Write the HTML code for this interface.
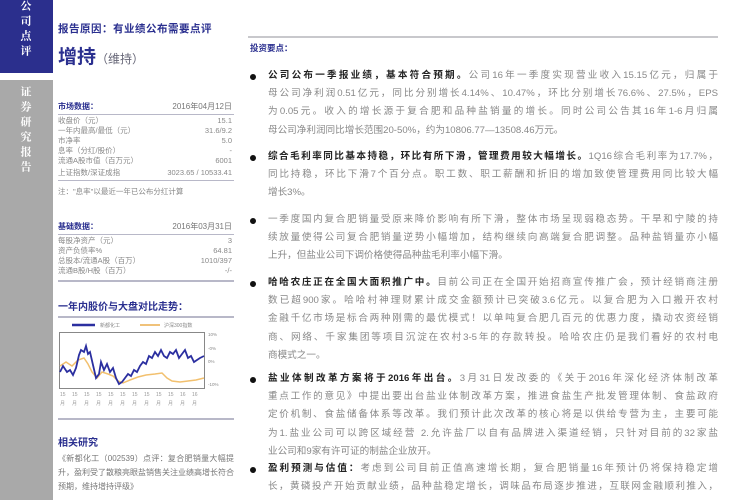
<!DOCTYPE html>
<html><head><meta charset="utf-8"><style>
*{margin:0;padding:0;box-sizing:border-box}
body{width:750px;height:500px;background:#fff;position:relative;overflow:hidden;font-family:"Liberation Sans","Noto Sans CJK SC",sans-serif;color:#777}
.a{position:absolute}
.vt{writing-mode:vertical-rl;color:#fff;font-weight:bold;font-size:11px;letter-spacing:4px;line-height:12px;font-family:"Noto Serif CJK SC","Noto Sans CJK SC",serif}
.row{position:absolute;left:58px;width:174px;font-size:7.5px;display:flex;justify-content:space-between;color:#888;line-height:10px}
.hd{position:absolute;left:58px;width:174px;font-size:8px;display:flex;justify-content:space-between;line-height:10px}
.hd b{color:#2a2f8f}
.ln{position:absolute;left:58px;width:176px;height:1px;background:#b8b8c8}
.p{position:absolute;left:268px;width:450px;font-size:9.6px;line-height:18.2px;color:#888;text-align:justify;text-align-last:justify}
.p div{white-space:nowrap;text-align-last:justify;text-align:justify}
.p b{color:#222}
.bl{position:absolute;left:250px;width:6px;height:6px;border-radius:50%;background:#111}
</style></head><body>
<div class="a" style="left:0;top:0;width:53px;height:73px;background:#2b2f8d"></div>
<div class="a vt" style="left:20px;top:0px">公司点评</div>
<div class="a" style="left:0;top:80px;width:53px;height:420px;background:#a9a9a9"></div>
<div class="a vt" style="left:20px;top:86px">证券研究报告</div>

<div class="a" style="left:58px;top:21px;font-size:10.5px;font-weight:bold;color:#2a2f8f;letter-spacing:0.5px">报告原因：有业绩公布需要点评</div>
<div class="a" style="left:58px;top:42px;font-size:19px;font-weight:bold;color:#2a2f8f">增持<span style="font-size:12px;font-weight:normal;color:#667">（维持）</span></div>

<div class="a" style="left:248px;top:36px;width:470px;height:2px;background:#c8c8cc"></div>
<div class="a" style="left:250px;top:42px;font-size:8.5px;font-weight:bold;color:#2a2f8f">投资要点：</div>

<div class="hd" style="top:102px"><b>市场数据：</b><span>2016年04月12日</span></div>
<div class="ln" style="top:114px"></div>
<div class="row" style="top:116px"><span>收盘价（元）</span><span>15.1</span></div>
<div class="row" style="top:126px"><span>一年内最高/最低（元）</span><span>31.6/9.2</span></div>
<div class="row" style="top:136px"><span>市净率</span><span>5.0</span></div>
<div class="row" style="top:146px"><span>息率（分红/股价）</span><span>-</span></div>
<div class="row" style="top:156px"><span>流通A股市值（百万元）</span><span>6001</span></div>
<div class="row" style="top:168px"><span>上证指数/深证成指</span><span>3023.65 / 10533.41</span></div>
<div class="ln" style="top:180px"></div>
<div class="row" style="top:187px;justify-content:flex-start"><span>注："息率"以最近一年已公布分红计算</span></div>

<div class="hd" style="top:222px"><b>基础数据：</b><span>2016年03月31日</span></div>
<div class="ln" style="top:234px"></div>
<div class="row" style="top:236px"><span>每股净资产（元）</span><span>3</span></div>
<div class="row" style="top:246px"><span>资产负债率%</span><span>64.81</span></div>
<div class="row" style="top:256px"><span>总股本/流通A股（百万）</span><span>1010/397</span></div>
<div class="row" style="top:266px"><span>流通B股/H股（百万）</span><span>-/-</span></div>
<div class="ln" style="top:280px;height:2px"></div>

<div class="a" style="left:58px;top:298px;font-size:10px;font-weight:bold;color:#2a2f8f">一年内股价与大盘对比走势：</div>
<div class="ln" style="top:316px;height:2px"></div>
<svg class="a" style="left:55px;top:318px" width="190" height="95" viewBox="55 318 190 95">
<line x1="72" y1="325" x2="95" y2="325" stroke="#2b2fa0" stroke-width="2.5"/>
<text x="100" y="327" font-size="5" fill="#888">新都化工</text>
<line x1="140" y1="325" x2="160" y2="325" stroke="#f0c27a" stroke-width="2"/>
<text x="164" y="327" font-size="5" fill="#888">沪深300指数</text>
<rect x="59.5" y="332.5" width="145" height="56" fill="#fff" stroke="#888" stroke-width="1"/>
<polyline fill="none" stroke="#f2c06e" stroke-width="1.5" points="60,366 66,362 72,366 78,360 84,358 88,364 92,372 97,378 102,372 108,374 113,376 118,381 123,383 130,380 138,377 146,375 155,374 162,373 167,378 172,381 180,382 188,381 196,380 204,378"/>
<polyline fill="none" stroke="#2b2fa0" stroke-width="1.8" points="60,372 63,366 67,372 70,370 73,375 76,368 79,355 81,350 84,352 86,346 88,354 90,352 93,365 96,378 99,374 101,362 104,370 107,364 110,372 113,368 116,378 119,384 122,382 125,378 128,374 131,376 134,370 137,372 140,366 143,362 146,364 149,356 152,358 155,352 158,356 161,350 164,356 167,358 170,352 173,354 176,350 179,358 182,354 185,350 188,358 191,356 194,362 197,360 200,358 204,356"/>
<g font-size="4.5" fill="#888"><text x="208" y="336">10%</text><text x="208" y="350">-0%</text><text x="208" y="363">0%</text><text x="208" y="386">-10%</text></g>
<g font-size="5" fill="#999">
<text x="60" y="396">15</text><text x="72" y="396">15</text><text x="84" y="396">15</text><text x="96" y="396">15</text><text x="108" y="396">15</text><text x="120" y="396">15</text><text x="132" y="396">15</text><text x="144" y="396">15</text><text x="156" y="396">15</text><text x="168" y="396">15</text><text x="180" y="396">16</text><text x="192" y="396">16</text>
<text x="60" y="405">月</text><text x="72" y="405">月</text><text x="84" y="405">月</text><text x="96" y="405">月</text><text x="108" y="405">月</text><text x="120" y="405">月</text><text x="132" y="405">月</text><text x="144" y="405">月</text><text x="156" y="405">月</text><text x="168" y="405">月</text><text x="180" y="405">月</text><text x="192" y="405">月</text></g>
</svg>
<div class="ln" style="top:418px;height:2px"></div>
<div class="a" style="left:58px;top:434px;font-size:10px;font-weight:bold;color:#2a2f8f">相关研究</div>
<div class="a" style="left:58px;top:452px;width:176px;font-size:8px;line-height:14px;color:#777;text-align:justify">《新都化工（002539）点评：复合肥销量大幅提升，盈利受了散粮亮眼盐销售关注业绩高增长符合预期，维持增持评级》</div>

<div class="bl" style="top:74px"></div>
<div class="p" style="top:67px"><div><b>公司公布一季报业绩，基本符合预期。</b>公司16年一季度实现营业收入15.15亿元，归属于</div><div>母公司净利润0.51亿元，同比分别增长4.14%、10.47%，环比分别增长76.6%、27.5%，EPS</div><div>为0.05元。收入的增长源于复合肥和品种盐销量的增长。同时公司公告其16年1-6月归属</div><div style="text-align-last:left">母公司净利润同比增长范围20-50%，约为10806.77—13508.46万元。</div></div>

<div class="bl" style="top:155px"></div>
<div class="p" style="top:148px"><div><b>综合毛利率同比基本持稳，环比有所下滑，管理费用较大幅增长。</b>1Q16综合毛利率为17.7%，</div><div>同比持稳，环比下滑7个百分点。职工数、职工薪酬和折旧的增加致使管理费用同比较大幅</div><div style="text-align-last:left">增长3%。</div></div>

<div class="bl" style="top:218px"></div>
<div class="p" style="top:211px"><div>一季度国内复合肥销量受原来降价影响有所下滑，整体市场呈现弱稳态势。干旱和宁陵的持</div><div>续放量使得公司复合肥销量逆势小幅增加，结构继续向高端复合肥调整。品种盐销量亦小幅</div><div style="text-align-last:left">上升，但盐业公司下调价格使得品种盐毛利率小幅下滑。</div></div>

<div class="bl" style="top:281px"></div>
<div class="p" style="top:274px"><div><b>哈哈农庄正在全国大面积推广中。</b>目前公司正在全国开始招商宣传推广会，预计经销商注册</div><div>数已超900家。哈哈村神理财累计成交金额预计已突破3.6亿元。以复合肥为入口搬开农村</div><div>金融千亿市场是标合两种刚需的最优模式！以单吨复合肥几百元的优惠力度，撬动农资经销</div><div>商、网络、千家集团等项目沉淀在农村3-5年的存款转投。哈哈农庄仍是我们看好的农村电</div><div style="text-align-last:left">商模式之一。</div></div>

<div class="bl" style="top:377px"></div>
<div class="p" style="top:370px"><div><b>盐业体制改革方案将于2016年出台。</b>3月31日发改委的《关于2016年深化经济体制改革</div><div>重点工作的意见》中提出要出台盐业体制改革方案，推进食盐生产批发管理体制、食盐政府</div><div>定价机制、食盐储备体系等改革。我们预计此次改革的核心将是以供给专营为主，主要可能</div><div>为1.盐业公司可以跨区域经营 2.允许盐厂以自有品牌进入渠道经销，只针对目前的32家盐</div><div style="text-align-last:left">业公司和9家有许可证的制盐企业放开。</div></div>

<div class="bl" style="top:467px"></div>
<div class="p" style="top:460px"><div><b>盈利预测与估值：</b>考虑到公司目前正值高速增长期，复合肥销量16年预计仍将保持稳定增</div><div>长，黄磷投产开始贡献业绩，品种盐稳定增长，调味品布局逐步推进，互联网金融顺利推入，</div></div>
</body></html>
